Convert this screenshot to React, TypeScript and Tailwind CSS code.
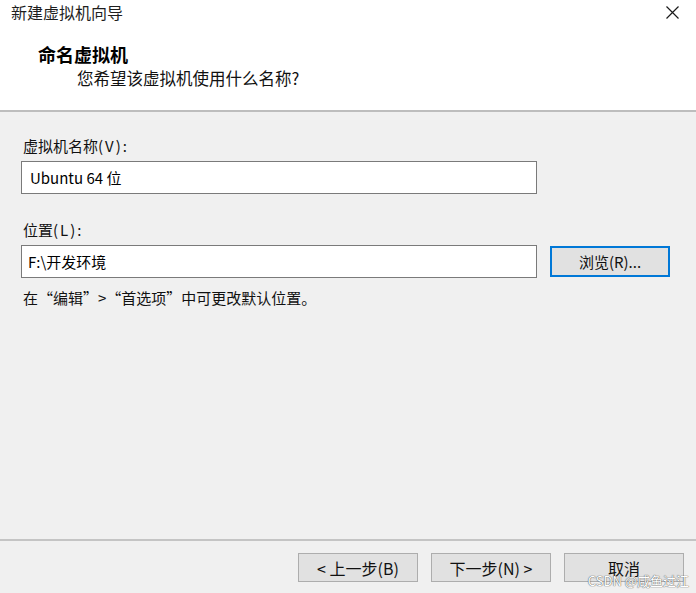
import React from 'react';

const font = { fontFamily: '"Noto Sans CJK SC", "Noto Sans", sans-serif' };

function WinButton({ label, focused = false, className = '' }: { label: string; focused?: boolean; className?: string }) {
  return (
    <div
      className={
        'flex items-center justify-center bg-[#e1e1e1] leading-none text-[#111] ' +
        (focused ? 'border-2 border-[#0078d7] ' : 'border border-[#adadad] ') +
        className
      }
    >
      {label}
    </div>
  );
}

function Label({ text, hotkey }: { text: string; hotkey: string }) {
  return (
    <div className="pl-[2px] text-[15px] leading-[20px] text-[#111]">
      {text}
      <span className="tracking-[2px]">{hotkey}</span>
    </div>
  );
}

export default function App() {
  return (
    <div className="relative flex h-[593px] w-[696px] flex-col overflow-hidden bg-[#f0f0f0] text-black" style={font}>
      {/* header */}
      <div className="h-[112px] shrink-0 border-b-2 border-[#bdbdbd] bg-white">
        <div className="flex h-[24px] items-center justify-between pl-[11px] pr-[17px]">
          <span className="text-[16px] leading-[24px] text-[#1e1e1e]">新建虚拟机向导</span>
          <svg width="13" height="13" viewBox="0 0 13 13" className="mt-[1px]">
            <path d="M0.5 0.5L12.5 12.5M12.5 0.5L0.5 12.5" stroke="#1a1a1a" strokeWidth="1.2" />
          </svg>
        </div>
        <div className="mt-[18px] pl-[38px] text-[18px] font-bold leading-[24px]">命名虚拟机</div>
        <div className="pl-[77px] text-[16.5px] leading-[24px] text-[#111]">您希望该虚拟机使用什么名称?</div>
      </div>

      {/* body */}
      <div className="flex flex-1 flex-col px-[21px]">
        <div className="mt-[24px]">
          <Label text="虚拟机名称" hotkey="(V):" />
        </div>
        <div className="mt-[5px] flex h-[33px] w-[516px] items-center border border-[#7a7a7a] bg-white pl-[8px] text-[15px] leading-none">
          Ubuntu 64 位
        </div>

        <div className="mt-[26px]">
          <Label text="位置" hotkey="(L):" />
        </div>
        <div className="mt-[5px] flex items-center">
          <div className="flex h-[33px] w-[516px] items-center border border-[#7a7a7a] bg-white pl-[6px] text-[15px] leading-none">
            F:\开发环境
          </div>
          <WinButton label="浏览(R)..." focused className="ml-[13px] h-[31px] w-[120px] text-[15px]" />
        </div>

        <div className="mt-[10px] pl-[2px] text-[15px] leading-[20px] text-[#111]">在“编辑”&gt;“首选项”中可更改默认位置。</div>
      </div>

      {/* footer */}
      <div className="h-[54px] shrink-0 border-t-2 border-[#c4c4c4] pt-[12px]">
        <div className="flex justify-end gap-[13px] pr-[12px]">
          <WinButton label="< 上一步(B)" className="h-[29px] w-[120px] text-[16px]" />
          <WinButton label="下一步(N) >" className="h-[29px] w-[120px] text-[16px]" />
          <WinButton label="取消" className="h-[29px] w-[120px] text-[16px]" />
        </div>
      </div>

      <div className="absolute bottom-[6px] right-[7px] text-[13px] leading-none text-white [text-shadow:0_0_1px_#555,0_0_1px_#555]">
        CSDN @咸鱼过江
      </div>
    </div>
  );
}
